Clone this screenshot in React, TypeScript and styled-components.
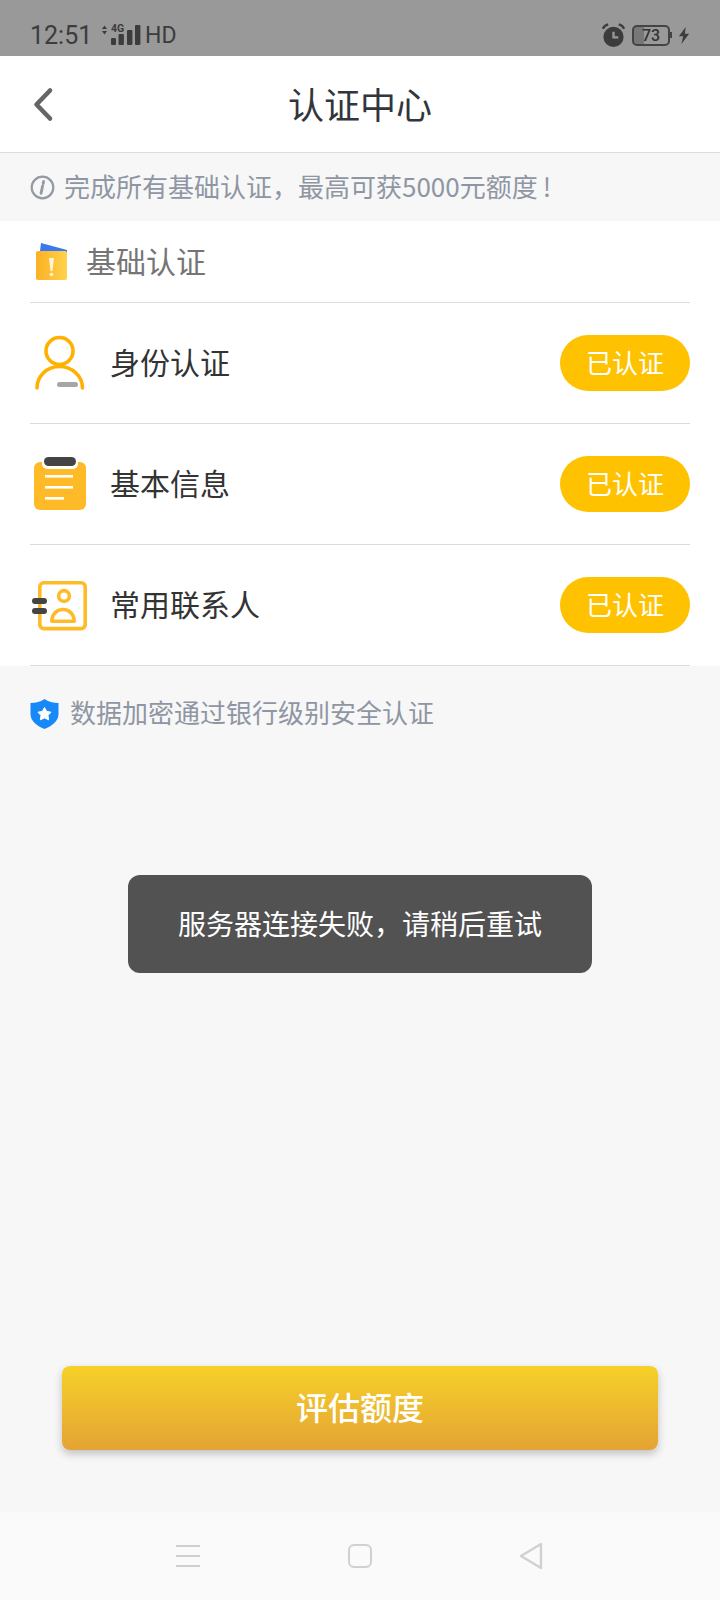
import styled, { createGlobalStyle } from "styled-components";

const GlobalStyle = createGlobalStyle`
    html, body {
        margin: 0;
        padding: 0;
        background: #f7f7f7;
        font-family: "Noto Sans CJK SC", "Noto Sans", sans-serif;
    }
    * {
        box-sizing: border-box;
    }
`;

const Page = styled.div`
    position: relative;
    width: 720px;
    height: 1600px;
    overflow: hidden;
    display: flex;
    flex-direction: column;
    background: #f7f7f7;
`;

const StatusBar = styled.div`
    height: 56px;
    flex: none;
    background: #999999;
    color: #3c3c3c;
    padding: 14px 30px 0 30px;
    display: flex;
    align-items: center;
    justify-content: space-between;
`;

const StatusGroup = styled.div`
    display: flex;
    align-items: center;
`;

const StatusTime = styled.span`
    width: 70px;
    font-family: Roboto, sans-serif;
    font-size: 25px;
    line-height: 30px;
    padding-top: 2px;
`;

const StatusHd = styled.span`
    font-family: Roboto, sans-serif;
    font-size: 23px;
    line-height: 30px;
    margin-left: 4px;
    padding-top: 2px;
`;

const Battery = styled.div`
    position: relative;
    width: 38px;
    height: 21px;
    margin: 0 8px 0 6px;
    border: 2px solid #444;
    border-radius: 5px;
    font-family: Roboto, sans-serif;
    font-size: 16px;
    font-weight: 500;
    line-height: 17px;
    text-align: center;
    color: #333;
    background: linear-gradient(to right, #777 0, #777 30%, transparent 30%);
    &::after {
        content: "";
        position: absolute;
        right: -4px;
        top: 5px;
        width: 2px;
        height: 6px;
        background: #444;
    }
`;

const Header = styled.header`
    height: 97px;
    flex: none;
    background: #fff;
    border-bottom: 1px solid #dcdcdc;
    display: flex;
    align-items: center;
    justify-content: center;
    position: relative;
`;

const BackButton = styled.button`
    position: absolute;
    left: 30px;
    top: 28px;
    width: 28px;
    height: 40px;
    padding: 0;
    border: none;
    background: none;
`;

const Title = styled.h1`
    margin: 0;
    padding-bottom: 2px;
    font-size: 36px;
    font-weight: 400;
    line-height: 50px;
    color: #33353c;
`;

const Notice = styled.div`
    height: 68px;
    flex: none;
    padding: 0 30px;
    display: flex;
    align-items: center;
    gap: 9px;
    font-size: 26px;
    color: #8f96a3;
`;

const ShiftedText = styled.span`
    padding-bottom: 4px;
`;

const Bang = styled.span`
    margin-left: 5px;
`;

const SectionHead = styled.div`
    height: 81px;
    flex: none;
    background: #fff;
    padding: 0 30px 0 36px;
    display: flex;
    align-items: center;
    gap: 19px;
    font-size: 30px;
    color: #757575;
`;

const List = styled.div`
    background: #fff;
    flex: none;
`;

const Row = styled.div`
    height: 121px;
    margin: 0 30px;
    border-top: 1px solid #dcdcdc;
    display: flex;
    align-items: center;
`;

const RowIcon = styled.div`
    width: 60px;
    height: 60px;
    margin-right: 20px;
    flex: none;
`;

const RowLabel = styled.span`
    flex: 1;
    font-size: 30px;
    color: #333333;
    padding-bottom: 4px;
`;

const Badge = styled.span`
    width: 130px;
    height: 56px;
    padding-bottom: 4px;
    border-radius: 28px;
    background: #ffc200;
    color: #fff;
    font-size: 26px;
    display: flex;
    align-items: center;
    justify-content: center;
`;

const LastLine = styled.div`
    height: 1px;
    margin: 0 30px;
    background: #dcdcdc;
`;

const Footnote = styled.div`
    padding: 27px 30px 0 30px;
    display: flex;
    align-items: center;
    gap: 11px;
    font-size: 26px;
    line-height: 38px;
    color: #8f96a3;
`;

const Main = styled.main`
    flex: 1;
    display: flex;
    flex-direction: column;
    align-items: center;
    justify-content: flex-end;
    padding-bottom: 62px;
`;

const EvalButton = styled.button`
    width: 596px;
    height: 84px;
    padding: 0 0 4px;
    border: none;
    border-radius: 8px;
    background: linear-gradient(to bottom, #f6d128, #e4a335);
    box-shadow: 0 4px 8px rgba(0, 0, 0, 0.22);
    color: #fff;
    font-family: inherit;
    font-size: 32px;
    font-weight: 500;
`;

const Toast = styled.div`
    position: absolute;
    left: 128px;
    top: 875px;
    width: 464px;
    height: 98px;
    padding-bottom: 2px;
    border-radius: 12px;
    background: #525252;
    color: #fff;
    font-size: 28px;
    display: flex;
    align-items: center;
    justify-content: center;
`;

const NavBar = styled.nav`
    height: 88px;
    flex: none;
    background: #fafafa;
    display: flex;
    align-items: center;
    justify-content: center;
    gap: 148px;
`;

const BackIcon = () => (
    <svg width="28" height="40" viewBox="0 0 28 40">
        <path d="M20 6.5 L6.5 20.5 L20 34.5" fill="none" stroke="#666" strokeWidth="4.6" strokeLinecap="round" strokeLinejoin="round" />
    </svg>
);

const SignalIcon = () => (
    <svg width="41" height="24" viewBox="0 0 41 24">
        <path d="M2 6 L4.5 2.5 L7 6 Z M2 8 L4.5 11.5 L7 8 Z" fill="#3c3c3c" />
        <text x="11" y="9" fontFamily="Roboto, sans-serif" fontSize="10.5" fontWeight="700" fill="#3c3c3c">
            4G
        </text>
        <rect x="11" y="15" width="5" height="7" rx="1" fill="#3c3c3c" />
        <rect x="18.5" y="11" width="5.4" height="11" rx="1" fill="#3c3c3c" />
        <rect x="27" y="7" width="5.4" height="15" rx="1" fill="#3c3c3c" />
        <rect x="35" y="2" width="5.4" height="20" rx="1" fill="#3c3c3c" />
    </svg>
);

const AlarmIcon = () => (
    <svg width="25" height="25" viewBox="0 0 26 26">
        <circle cx="13" cy="14.5" r="10.5" fill="#3c3c3c" />
        <path d="M13 9 V15 H18" fill="none" stroke="#999" strokeWidth="2.4" />
        <path d="M2 6 Q3.5 2.5 7.5 1.5 M24 6 Q22.5 2.5 18.5 1.5" fill="none" stroke="#3c3c3c" strokeWidth="2.4" />
    </svg>
);

const BoltIcon = () => (
    <svg width="12" height="17" viewBox="0 0 14 20">
        <path d="M9 0 L1 11 H6 L4 20 L13 8 H8 Z" fill="#3c3c3c" />
    </svg>
);

const InfoIcon = () => (
    <svg width="25" height="25" viewBox="0 0 25 25">
        <circle cx="12.5" cy="12.5" r="10.8" fill="none" stroke="#939aa6" strokeWidth="2.2" />
        <path d="M13.6 6.4 L13.2 8.6 M12.6 11 L11 18.4" fill="none" stroke="#939aa6" strokeWidth="2.8" strokeLinecap="round" />
    </svg>
);

const WalletIcon = () => (
    <svg width="31" height="38" viewBox="0 0 31 38">
        <defs>
            <linearGradient id="wallet" x1="0" x2="1" y1="0" y2="0">
                <stop offset="0" stopColor="#fbb024" />
                <stop offset="1" stopColor="#ffd24c" />
            </linearGradient>
        </defs>
        <path d="M4 8 L5 0 L31 7 V10 Z" fill="#3a78f0" />
        <rect x="0" y="8" width="31" height="29" rx="2" fill="url(#wallet)" />
        <path d="M13 15 H18 L16.4 28 H14.6 Z" fill="#fff6d8" />
        <circle cx="15.5" cy="31.5" r="1.8" fill="#fff6d8" />
    </svg>
);

const PersonIcon = () => (
    <svg width="60" height="60" viewBox="0 0 60 60">
        <circle cx="29.5" cy="18" r="13.5" fill="none" stroke="#ffb000" strokeWidth="3.6" />
        <path d="M7 55 C7 43 17 33.5 29.5 33.5 C42 33.5 52.5 43 52.5 55" fill="none" stroke="#ffb000" strokeWidth="3.6" strokeLinecap="round" />
        <rect x="27" y="49" width="21" height="5" rx="2.5" fill="#a6a6a6" />
    </svg>
);

const ClipboardIcon = () => (
    <svg width="60" height="60" viewBox="0 0 60 60">
        <rect x="4" y="8" width="52" height="48" rx="6" fill="#ffbb27" />
        <rect x="12" y="3" width="36" height="12" rx="5" fill="#fff" />
        <rect x="14" y="3" width="32" height="9" rx="4.5" fill="#444" />
        <rect x="15" y="21" width="28" height="2.6" fill="#fff" />
        <rect x="15" y="32" width="28" height="2.6" fill="#fff" />
        <rect x="15" y="43" width="19" height="2.6" fill="#fff" />
    </svg>
);

const ContactIcon = () => (
    <svg width="60" height="60" viewBox="0 0 60 60">
        <rect x="9.8" y="7.8" width="45.4" height="45.8" rx="4" fill="none" stroke="#ffbb27" strokeWidth="3.6" />
        <circle cx="34" cy="21" r="5.4" fill="none" stroke="#ffbb27" strokeWidth="3.6" />
        <path d="M21.8 46.2 C21.8 38 28 34.5 33 34.5 C38 34.5 44.2 38 44.2 46.2 Z" fill="none" stroke="#ffbb27" strokeWidth="3.6" strokeLinejoin="round" />
        <rect x="2" y="23" width="15" height="6" rx="3" fill="#444" />
        <rect x="2" y="33" width="15" height="6" rx="3" fill="#444" />
    </svg>
);

const ShieldIcon = () => (
    <svg width="29" height="30" viewBox="0 0 29 30">
        <path d="M14.5 0 C18 2.6 23 4 28.5 4 V15 C28.5 22 22 27 14.5 30 C7 27 0.5 22 0.5 15 V4 C6 4 11 2.6 14.5 0 Z" fill="#1688f7" />
        <path d="M14.5 8.5 L16.7 12.4 L21 13.2 L18 16.4 L18.6 20.8 L14.5 18.9 L10.4 20.8 L11 16.4 L8 13.2 L12.3 12.4 Z" fill="#fff" strokeLinejoin="round" stroke="#fff" strokeWidth="1" />
    </svg>
);

const MenuIcon = () => (
    <svg width="24" height="24" viewBox="0 0 24 24">
        <path d="M0 2 H24 M0 12 H24 M0 22 H24" stroke="#d0d0d0" strokeWidth="2" />
    </svg>
);

const HomeIcon = () => (
    <svg width="24" height="24" viewBox="0 0 24 24">
        <rect x="1" y="1" width="22" height="22" rx="5" fill="none" stroke="#d0d0d0" strokeWidth="2" />
    </svg>
);

const TriangleIcon = () => (
    <svg width="24" height="28" viewBox="2 0 24 28">
        <path d="M23 2 V26 L3 14 Z" fill="none" stroke="#d0d0d0" strokeWidth="2.4" strokeLinejoin="round" />
    </svg>
);

const items = [
    { label: "身份认证", icon: <PersonIcon /> },
    { label: "基本信息", icon: <ClipboardIcon /> },
    { label: "常用联系人", icon: <ContactIcon /> },
];

export default function App() {
    return (
        <Page>
            <GlobalStyle />
            <StatusBar>
                <StatusGroup>
                    <StatusTime>12:51</StatusTime>
                    <SignalIcon />
                    <StatusHd>HD</StatusHd>
                </StatusGroup>
                <StatusGroup>
                    <AlarmIcon />
                    <Battery>73</Battery>
                    <BoltIcon />
                </StatusGroup>
            </StatusBar>
            <Header>
                <BackButton>
                    <BackIcon />
                </BackButton>
                <Title>认证中心</Title>
            </Header>
            <Notice>
                <InfoIcon />
                <ShiftedText>
                    完成所有基础认证，最高可获5000元额度<Bang>!</Bang>
                </ShiftedText>
            </Notice>
            <SectionHead>
                <WalletIcon />
                <ShiftedText>基础认证</ShiftedText>
            </SectionHead>
            <List>
                {items.map((item) => (
                    <Row key={item.label}>
                        <RowIcon>{item.icon}</RowIcon>
                        <RowLabel>{item.label}</RowLabel>
                        <Badge>已认证</Badge>
                    </Row>
                ))}
                <LastLine />
            </List>
            <Footnote>
                <ShieldIcon />
                <ShiftedText>数据加密通过银行级别安全认证</ShiftedText>
            </Footnote>
            <Main>
                <EvalButton>评估额度</EvalButton>
            </Main>
            <Toast>服务器连接失败，请稍后重试</Toast>
            <NavBar>
                <MenuIcon />
                <HomeIcon />
                <TriangleIcon />
            </NavBar>
        </Page>
    );
}
